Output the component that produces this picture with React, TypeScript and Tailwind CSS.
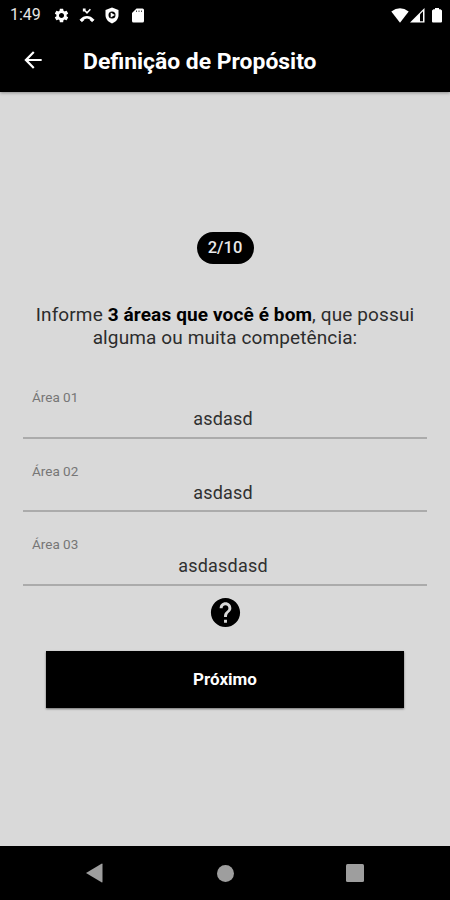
import React from "react";
import { MdArrowBack, MdHelp, MdSettings } from "react-icons/md";

const fields = [
  { label: "Área 01", value: "asdasd" },
  { label: "Área 02", value: "asdasd" },
  { label: "Área 03", value: "asdasdasd" },
];

function StatusBar() {
  return (
    <div className="flex h-[30px] items-center pl-[10px] pr-[8px] text-white">
      <span className="w-[43px] text-[16px] leading-[30px] text-[#e6e6e6]">1:49</span>
      <MdSettings className="size-[17px] shrink-0" />
      <svg className="ml-[9px] h-[15px] w-[16px] shrink-0" viewBox="0 0 16 15" fill="none" stroke="currentColor">
        <path d="M4.600 1.200 8 4.800l3.400-3.600M4.600 3.600V1.200h2" strokeWidth="1.500" />
        <path d="M1.800 12.300C5.500 8.300 10.500 8.300 14.200 12.300" strokeWidth="2.400" />
        <path d="m.8 11.700 2 2 2-1.500v-2M15.200 11.700l-2 2-2-1.500v-2" fill="currentColor" strokeWidth=".7" />
      </svg>
      <svg className="ml-[10px] h-[17px] w-[14px] shrink-0" viewBox="0 0 14 17">
        <path fill="currentColor" d="M7 .5 13.500 3v5c0 4-2.700 7-6.500 8.500C3.200 15 .5 12 .5 8V3z" />
        <circle cx="7" cy="8" r="3.500" fill="#000" />
        <path fill="currentColor" d="m5.700 5.500 4.200 2.500-4.200 2.500z" />
      </svg>
      <svg className="ml-[13px] h-[15px] w-[12px] shrink-0" viewBox="0 0 12 15">
        <path fill="currentColor" d="M4.500.5H10.500Q12 .5 12 2v11q0 1.500-1.500 1.500h-9Q0 14.500 0 13V5z" />
        <path stroke="#000" strokeWidth=".7" d="M4.500 2.500v1.500M7 2.500v1.500M9.500 2.500v1.500" />
      </svg>
      <svg className="ml-auto h-[15px] w-[18px] shrink-0" viewBox="0 0 18 15">
        <path fill="currentColor" d="M.3 3.600Q9-3.200 17.700 3.600L9 14.700z" />
      </svg>
      <svg className="ml-[1px] h-[15px] w-[15px] shrink-0" viewBox="0 0 15 15">
        <path fill="currentColor" d="M0 14.500 14.500 0v14.500z" />
        <path fill="#000" d="M10 6.300 13 3.300v10h-3z" />
      </svg>
      <svg className="ml-[7px] h-[15px] w-[10px] shrink-0" viewBox="0 0 10 15">
        <path fill="currentColor" d="M3 0h4v1.300h1.500L10 2.500v11q0 1-1 1H1q-1 0-1-1v-11l1.500-1.200H3z" />
      </svg>
    </div>
  );
}

function Field({ label, value }: { label: string; value: string }) {
  return (
    <div className="flex h-[73.500px] flex-col border-b-[2px] border-[#ababab] pt-[23px]">
      <div className="pl-[9px] text-[13.500px] leading-[18px] text-[#767676]">{label}</div>
      <div className="pr-[4px] pt-[1px] text-center text-[18px] leading-[24px] tracking-[0.200px] text-[#303030]">{value}</div>
    </div>
  );
}

export default function App() {
  return (
    <div className="flex h-[900px] w-[450px] flex-col overflow-hidden bg-[#d9d9d9] font-[Roboto,sans-serif]">
      <header className="h-[92px] shrink-0 bg-black shadow-[0_1px_3px_rgba(0,0,0,0.35)]">
        <StatusBar />
        <div className="flex h-[62px] items-center pl-[20px] text-white">
          <MdArrowBack className="-mt-[2px] size-[26px] shrink-0" />
          <h1 className="ml-[37px] whitespace-nowrap pt-[1px] text-[22.900px] font-bold leading-[30px]">Definição de Propósito</h1>
        </div>
      </header>

      <main className="flex flex-1 flex-col items-center pt-[140px]">
        <div className="flex h-[32px] w-[57px] items-center justify-center rounded-full bg-black text-[16.500px] font-medium text-[#e8e8e8]">2/10</div>
        <p className="mt-[39px] whitespace-nowrap text-center text-[19px] leading-[23px] tracking-[0.120px] text-[#2c2c2c]">
          Informe <b className="font-bold text-black">3 áreas que você é bom</b>, que possui
          <br />
          alguma ou muita competência:
        </p>
        <div className="mt-[16px] flex w-[404px] flex-col">
          {fields.map((f) => (
            <Field key={f.label} {...f} />
          ))}
        </div>
        <MdHelp className="mt-[9px] size-[35px] shrink-0 text-black" />
        <button className="mt-[21px] h-[57px] w-[358px] shrink-0 bg-black pt-[2px] text-[17px] font-bold text-white shadow-[0_1px_2px_rgba(0,0,0,0.5)]">
          Próximo
        </button>
      </main>

      <nav className="flex h-[54px] shrink-0 items-center bg-black pl-[86px] text-[#9e9e9e]">
        <svg className="h-[20px] w-[17px]" viewBox="0 0 17 20" fill="currentColor">
          <path d="M0 10 15.500.7q1-.5 1 .5v17.600q0 1-1 .5z" />
        </svg>
        <div className="ml-[114px] size-[17px] rounded-full bg-[#9e9e9e]" />
        <div className="ml-[112px] size-[18px] rounded-[1.500px] bg-[#9e9e9e]" />
      </nav>
    </div>
  );
}
